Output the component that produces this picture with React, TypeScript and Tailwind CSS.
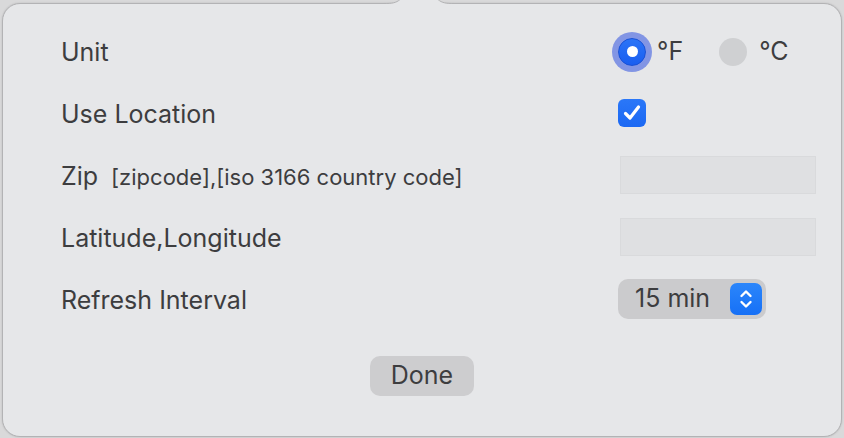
import React from "react";

const font = { fontFamily: "Inter, 'Noto Sans', sans-serif" };

function Radio({ checked }: { checked: boolean }) {
  if (checked) {
    return (
      <div className="w-[28px] h-[28px] rounded-full bg-[#8a9ce6] ring-[6px] ring-[#8295e4] flex items-center justify-center">
        <div className="w-[28px] h-[28px] rounded-full bg-gradient-to-b from-[#2b74f7] to-[#1a5ef0] border border-[#1850d6] flex items-center justify-center">
          <div className="w-[11px] h-[11px] rounded-full bg-white" />
        </div>
      </div>
    );
  }
  return <div className="w-[28px] h-[28px] rounded-full bg-[#cfd0d2]" />;
}

export default function App() {
  return (
    <div className="w-[844px] h-[438px] bg-[#d9d9da] overflow-hidden relative" style={font}>
      <div className="ml-[2px] mt-[3px] w-[840px] h-[434px] rounded-[18px] border border-[#b3b3b5] bg-[#e6e7e9] shadow-[0_0_2px_rgba(0,0,0,0.15)] pl-[58px] pt-[29px] text-[#3d3d3f]">
        <div className="flex flex-col gap-[22px]">
          {/* Unit */}
          <div className="flex items-center h-[40px]">
            <div className="w-[557px] text-[25px]">Unit</div>
            <div className="flex items-center -mt-[3px]">
              <Radio checked />
              <span className="ml-[11px] text-[25px]">°F</span>
              <div className="ml-[36px]">
                <Radio checked={false} />
              </div>
              <span className="ml-[12px] text-[25px]">°C</span>
            </div>
          </div>
          {/* Use Location */}
          <div className="flex items-center h-[40px]">
            <div className="w-[557px] text-[25px]">Use Location</div>
            <div className="-mt-[4px] w-[28px] h-[28px] rounded-[6px] bg-gradient-to-b from-[#2a77f8] to-[#1b68f3] flex items-center justify-center">
              <svg width="20" height="20" viewBox="0 0 20 20" fill="none">
                <path d="M3.5 10.5 L8 15 L16.5 4" stroke="white" strokeWidth="3.2" strokeLinecap="round" strokeLinejoin="round" />
              </svg>
            </div>
          </div>
          {/* Zip */}
          <div className="flex items-center h-[40px]">
            <div className="w-[557px] flex items-baseline">
              <span className="text-[25px]">Zip</span>
              <span className="ml-[13px] text-[22px]">[zipcode],[iso 3166 country code]</span>
            </div>
            <div className="ml-[2px] -mt-[4px] w-[196px] h-[38px] bg-[#dfe0e2] border border-[#d9dadc]" />
          </div>
          {/* Lat Long */}
          <div className="flex items-center h-[40px]">
            <div className="w-[557px] text-[25px]">Latitude,Longitude</div>
            <div className="ml-[2px] -mt-[4px] w-[196px] h-[38px] bg-[#dfe0e2] border border-[#d9dadc]" />
          </div>
          {/* Refresh */}
          <div className="flex items-center h-[40px]">
            <div className="w-[557px] text-[25px]">Refresh Interval</div>
            <div className="-mt-[4px] w-[148px] h-[40px] rounded-[10px] bg-[#cbcbcd] flex items-center pl-[17px] pr-[4px] justify-between">
              <span className="text-[25px]">15 min</span>
              <div className="w-[32px] h-[32px] rounded-[7px] bg-gradient-to-b from-[#2b86fb] to-[#1670f6] flex items-center justify-center">
                <svg width="16" height="22" viewBox="0 0 16 22" fill="none">
                  <path d="M3.5 8 L8 3.5 L12.5 8" stroke="white" strokeWidth="2.4" strokeLinecap="round" strokeLinejoin="round" />
                  <path d="M3.5 14 L8 18.5 L12.5 14" stroke="white" strokeWidth="2.4" strokeLinecap="round" strokeLinejoin="round" />
                </svg>
              </div>
            </div>
          </div>
        </div>
        <div className="flex justify-center mt-[35px] pr-[58px]">
          <div className="w-[104px] h-[40px] rounded-[10px] bg-[#cdcdcf] flex items-center justify-center text-[25px]">
            Done
          </div>
        </div>
      </div>
      {/* popover arrow */}
      <svg className="absolute left-[370px] top-0" width="100" height="8" viewBox="0 0 100 8" fill="none">
        <path d="M14 3.5 C22 3.5 26 3 30 -0.5 L68 -0.5 C72 3 76 3.5 84 3.5 L84 6 L14 6 Z" fill="#e6e7e9" />
        <path d="M5 3.5 L14 3.5 C22 3.5 26 3 30 -0.5" stroke="#b3b3b5" strokeWidth="1" />
        <path d="M68 -0.5 C72 3 76 3.5 84 3.5 L95 3.5" stroke="#b3b3b5" strokeWidth="1" />
      </svg>
    </div>
  );
}
